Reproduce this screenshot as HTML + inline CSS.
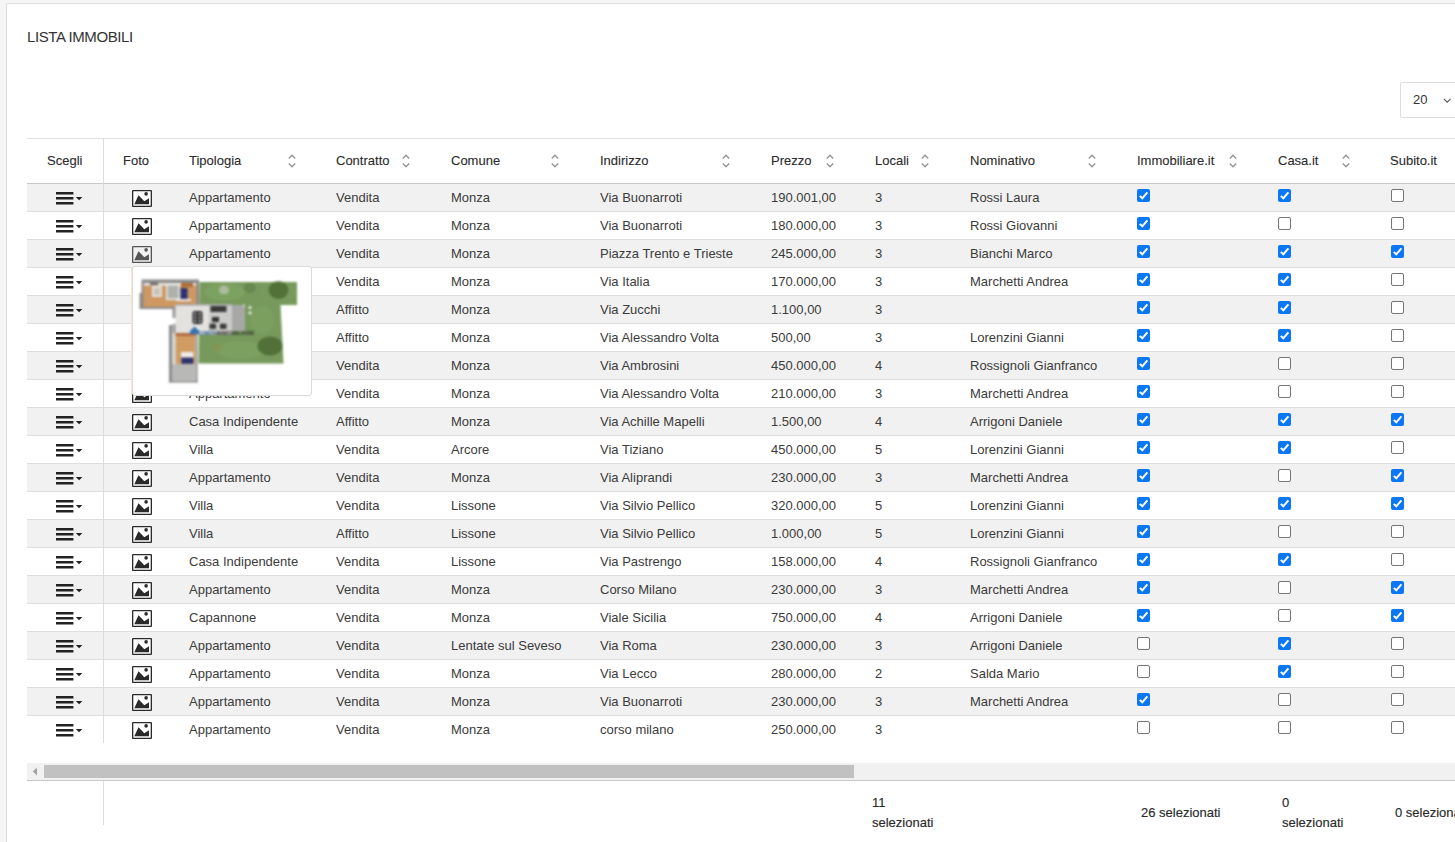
<!DOCTYPE html>
<html><head><meta charset="utf-8"><title>Lista Immobili</title>
<style>
*{box-sizing:border-box;margin:0;padding:0}
html,body{width:1455px;height:842px;overflow:hidden;background:#f5f5f5;font-family:"Liberation Sans",sans-serif;color:#3b3b3b;font-size:13px}
.card{position:absolute;left:6px;top:3px;width:1520px;height:900px;background:#fff;border:1px solid #dedede;border-radius:1px}
.abs{position:absolute;white-space:nowrap}
.title{left:27px;top:27px;font-size:15px;letter-spacing:-0.4px;line-height:19px;color:#333}
.sel{left:1400px;top:82px;width:80px;height:36px;border:1px solid #dcdcdc;border-radius:2px;background:#fff}
.sel span{position:absolute;left:12px;top:8px;line-height:18px;font-size:13px;color:#333}
.hline{position:absolute;left:27px;width:1440px;height:1px}
.row{position:absolute;left:27px;width:1440px;height:28px}
.row.g{background:#f1f1f1}
.t{position:absolute;white-space:nowrap;line-height:28px;height:28px}
.th{position:absolute;white-space:nowrap;line-height:44px;top:139px;color:#2b2b2b;-webkit-text-stroke:0.1px #2b2b2b}
.vsep{position:absolute;left:103px;width:1px;background:#dcdcdc}
.cb{position:absolute;width:13px;height:13px;border-radius:2px}
.cb.on{background:#0b77f5}
.cb.off{background:#fff;border:1px solid #767676}
.ft{position:absolute;white-space:nowrap;line-height:20px;color:#2b2b2b;-webkit-text-stroke:0.15px #2b2b2b}
</style></head><body>
<div class="card"></div>
<div class="abs title">LISTA IMMOBILI</div>
<div class="abs sel"><span>20</span><svg style="position:absolute;left:42px;top:15px" width="9" height="6" viewBox="0 0 9 6"><path d="M0.8 0.8 L4.2 4.2 L7.6 0.8" fill="none" stroke="#555" stroke-width="1.1"/></svg></div>

<div class="hline" style="top:138px;background:#dedede"></div>
<div class="th" style="left:47px">Scegli</div>
<div class="th" style="left:123px">Foto</div>
<div class="th" style="left:189px">Tipologia</div>
<svg class="abs" style="left:288px;top:154px" width="8" height="14" viewBox="0 0 8 14"><path d="M0.8 4.5 L4 1.3 L7.2 4.5 M0.8 9.5 L4 12.7 L7.2 9.5" fill="none" stroke="#959595" stroke-width="1.4"/></svg>
<div class="th" style="left:336px">Contratto</div>
<svg class="abs" style="left:402px;top:154px" width="8" height="14" viewBox="0 0 8 14"><path d="M0.8 4.5 L4 1.3 L7.2 4.5 M0.8 9.5 L4 12.7 L7.2 9.5" fill="none" stroke="#959595" stroke-width="1.4"/></svg>
<div class="th" style="left:451px">Comune</div>
<svg class="abs" style="left:551px;top:154px" width="8" height="14" viewBox="0 0 8 14"><path d="M0.8 4.5 L4 1.3 L7.2 4.5 M0.8 9.5 L4 12.7 L7.2 9.5" fill="none" stroke="#959595" stroke-width="1.4"/></svg>
<div class="th" style="left:600px">Indirizzo</div>
<svg class="abs" style="left:722px;top:154px" width="8" height="14" viewBox="0 0 8 14"><path d="M0.8 4.5 L4 1.3 L7.2 4.5 M0.8 9.5 L4 12.7 L7.2 9.5" fill="none" stroke="#959595" stroke-width="1.4"/></svg>
<div class="th" style="left:771px">Prezzo</div>
<svg class="abs" style="left:826px;top:154px" width="8" height="14" viewBox="0 0 8 14"><path d="M0.8 4.5 L4 1.3 L7.2 4.5 M0.8 9.5 L4 12.7 L7.2 9.5" fill="none" stroke="#959595" stroke-width="1.4"/></svg>
<div class="th" style="left:875px">Locali</div>
<svg class="abs" style="left:921px;top:154px" width="8" height="14" viewBox="0 0 8 14"><path d="M0.8 4.5 L4 1.3 L7.2 4.5 M0.8 9.5 L4 12.7 L7.2 9.5" fill="none" stroke="#959595" stroke-width="1.4"/></svg>
<div class="th" style="left:970px">Nominativo</div>
<svg class="abs" style="left:1088px;top:154px" width="8" height="14" viewBox="0 0 8 14"><path d="M0.8 4.5 L4 1.3 L7.2 4.5 M0.8 9.5 L4 12.7 L7.2 9.5" fill="none" stroke="#959595" stroke-width="1.4"/></svg>
<div class="th" style="left:1137px">Immobiliare.it</div>
<svg class="abs" style="left:1229px;top:154px" width="8" height="14" viewBox="0 0 8 14"><path d="M0.8 4.5 L4 1.3 L7.2 4.5 M0.8 9.5 L4 12.7 L7.2 9.5" fill="none" stroke="#959595" stroke-width="1.4"/></svg>
<div class="th" style="left:1278px">Casa.it</div>
<svg class="abs" style="left:1342px;top:154px" width="8" height="14" viewBox="0 0 8 14"><path d="M0.8 4.5 L4 1.3 L7.2 4.5 M0.8 9.5 L4 12.7 L7.2 9.5" fill="none" stroke="#959595" stroke-width="1.4"/></svg>
<div class="th" style="left:1390px">Subito.it</div>
<div class="hline" style="top:183px;background:#c9c9c9"></div>
<div class="row g" style="top:184px"></div>
<div class="hline" style="top:211px;background:#dedede"></div>
<svg class="abs" style="left:56px;top:192px" width="27" height="14" viewBox="0 0 27 14"><rect x="0" y="0" width="17.4" height="2.5" fill="#222"/><rect x="0" y="5" width="17.4" height="2.5" fill="#222"/><rect x="0" y="10" width="17.4" height="2.5" fill="#222"/><path d="M19.8 5 L26.4 5 L23.1 8.2 Z" fill="#222"/></svg>
<svg class="abs" style="left:132px;top:190px" width="20" height="17" viewBox="0 0 20 17"><rect x="0.65" y="0.65" width="18.7" height="15.7" rx="0.4" fill="#fff" stroke="#2a2a2a" stroke-width="1.3"/><path d="M2.3 14.2 L6.5 5.2 L12.3 11.2 L17 8.2 L17 14.2 Z" fill="#2a2a2a"/><circle cx="14.1" cy="3.9" r="1.8" fill="#2a2a2a"/></svg>
<div class="t" style="left:189px;top:184px">Appartamento</div>
<div class="t" style="left:336px;top:184px">Vendita</div>
<div class="t" style="left:451px;top:184px">Monza</div>
<div class="t" style="left:600px;top:184px">Via Buonarroti</div>
<div class="t" style="left:771px;top:184px">190.001,00</div>
<div class="t" style="left:875px;top:184px">3</div>
<div class="t" style="left:970px;top:184px">Rossi Laura</div>
<svg class="cb on" style="left:1137px;top:189px" viewBox="0 0 13 13"><path d="M2.8 6.9 L5.3 9.3 L10.4 3.3" fill="none" stroke="#fff" stroke-width="2"/></svg>
<svg class="cb on" style="left:1278px;top:189px" viewBox="0 0 13 13"><path d="M2.8 6.9 L5.3 9.3 L10.4 3.3" fill="none" stroke="#fff" stroke-width="2"/></svg>
<div class="cb off" style="left:1391px;top:189px"></div>
<div class="row" style="top:212px"></div>
<div class="hline" style="top:239px;background:#dedede"></div>
<svg class="abs" style="left:56px;top:220px" width="27" height="14" viewBox="0 0 27 14"><rect x="0" y="0" width="17.4" height="2.5" fill="#222"/><rect x="0" y="5" width="17.4" height="2.5" fill="#222"/><rect x="0" y="10" width="17.4" height="2.5" fill="#222"/><path d="M19.8 5 L26.4 5 L23.1 8.2 Z" fill="#222"/></svg>
<svg class="abs" style="left:132px;top:218px" width="20" height="17" viewBox="0 0 20 17"><rect x="0.65" y="0.65" width="18.7" height="15.7" rx="0.4" fill="#fff" stroke="#2a2a2a" stroke-width="1.3"/><path d="M2.3 14.2 L6.5 5.2 L12.3 11.2 L17 8.2 L17 14.2 Z" fill="#2a2a2a"/><circle cx="14.1" cy="3.9" r="1.8" fill="#2a2a2a"/></svg>
<div class="t" style="left:189px;top:212px">Appartamento</div>
<div class="t" style="left:336px;top:212px">Vendita</div>
<div class="t" style="left:451px;top:212px">Monza</div>
<div class="t" style="left:600px;top:212px">Via Buonarroti</div>
<div class="t" style="left:771px;top:212px">180.000,00</div>
<div class="t" style="left:875px;top:212px">3</div>
<div class="t" style="left:970px;top:212px">Rossi Giovanni</div>
<svg class="cb on" style="left:1137px;top:217px" viewBox="0 0 13 13"><path d="M2.8 6.9 L5.3 9.3 L10.4 3.3" fill="none" stroke="#fff" stroke-width="2"/></svg>
<div class="cb off" style="left:1278px;top:217px"></div>
<div class="cb off" style="left:1391px;top:217px"></div>
<div class="row g" style="top:240px"></div>
<div class="hline" style="top:267px;background:#dedede"></div>
<svg class="abs" style="left:56px;top:248px" width="27" height="14" viewBox="0 0 27 14"><rect x="0" y="0" width="17.4" height="2.5" fill="#222"/><rect x="0" y="5" width="17.4" height="2.5" fill="#222"/><rect x="0" y="10" width="17.4" height="2.5" fill="#222"/><path d="M19.8 5 L26.4 5 L23.1 8.2 Z" fill="#222"/></svg>
<svg class="abs" style="left:132px;top:246px" width="20" height="17" viewBox="0 0 20 17"><rect x="0.65" y="0.65" width="18.7" height="15.7" rx="0.4" fill="none" stroke="#555" stroke-width="1.3"/><path d="M2.3 14.2 L6.5 5.2 L12.3 11.2 L17 8.2 L17 14.2 Z" fill="#555"/><circle cx="14.1" cy="3.9" r="1.8" fill="#555"/></svg>
<div class="t" style="left:189px;top:240px">Appartamento</div>
<div class="t" style="left:336px;top:240px">Vendita</div>
<div class="t" style="left:451px;top:240px">Monza</div>
<div class="t" style="left:600px;top:240px">Piazza Trento e Trieste</div>
<div class="t" style="left:771px;top:240px">245.000,00</div>
<div class="t" style="left:875px;top:240px">3</div>
<div class="t" style="left:970px;top:240px">Bianchi Marco</div>
<svg class="cb on" style="left:1137px;top:245px" viewBox="0 0 13 13"><path d="M2.8 6.9 L5.3 9.3 L10.4 3.3" fill="none" stroke="#fff" stroke-width="2"/></svg>
<svg class="cb on" style="left:1278px;top:245px" viewBox="0 0 13 13"><path d="M2.8 6.9 L5.3 9.3 L10.4 3.3" fill="none" stroke="#fff" stroke-width="2"/></svg>
<svg class="cb on" style="left:1391px;top:245px" viewBox="0 0 13 13"><path d="M2.8 6.9 L5.3 9.3 L10.4 3.3" fill="none" stroke="#fff" stroke-width="2"/></svg>
<div class="row" style="top:268px"></div>
<div class="hline" style="top:295px;background:#dedede"></div>
<svg class="abs" style="left:56px;top:276px" width="27" height="14" viewBox="0 0 27 14"><rect x="0" y="0" width="17.4" height="2.5" fill="#222"/><rect x="0" y="5" width="17.4" height="2.5" fill="#222"/><rect x="0" y="10" width="17.4" height="2.5" fill="#222"/><path d="M19.8 5 L26.4 5 L23.1 8.2 Z" fill="#222"/></svg>
<svg class="abs" style="left:132px;top:274px" width="20" height="17" viewBox="0 0 20 17"><rect x="0.65" y="0.65" width="18.7" height="15.7" rx="0.4" fill="#fff" stroke="#2a2a2a" stroke-width="1.3"/><path d="M2.3 14.2 L6.5 5.2 L12.3 11.2 L17 8.2 L17 14.2 Z" fill="#2a2a2a"/><circle cx="14.1" cy="3.9" r="1.8" fill="#2a2a2a"/></svg>
<div class="t" style="left:189px;top:268px">Appartamento</div>
<div class="t" style="left:336px;top:268px">Vendita</div>
<div class="t" style="left:451px;top:268px">Monza</div>
<div class="t" style="left:600px;top:268px">Via Italia</div>
<div class="t" style="left:771px;top:268px">170.000,00</div>
<div class="t" style="left:875px;top:268px">3</div>
<div class="t" style="left:970px;top:268px">Marchetti Andrea</div>
<svg class="cb on" style="left:1137px;top:273px" viewBox="0 0 13 13"><path d="M2.8 6.9 L5.3 9.3 L10.4 3.3" fill="none" stroke="#fff" stroke-width="2"/></svg>
<svg class="cb on" style="left:1278px;top:273px" viewBox="0 0 13 13"><path d="M2.8 6.9 L5.3 9.3 L10.4 3.3" fill="none" stroke="#fff" stroke-width="2"/></svg>
<div class="cb off" style="left:1391px;top:273px"></div>
<div class="row g" style="top:296px"></div>
<div class="hline" style="top:323px;background:#dedede"></div>
<svg class="abs" style="left:56px;top:304px" width="27" height="14" viewBox="0 0 27 14"><rect x="0" y="0" width="17.4" height="2.5" fill="#222"/><rect x="0" y="5" width="17.4" height="2.5" fill="#222"/><rect x="0" y="10" width="17.4" height="2.5" fill="#222"/><path d="M19.8 5 L26.4 5 L23.1 8.2 Z" fill="#222"/></svg>
<svg class="abs" style="left:132px;top:302px" width="20" height="17" viewBox="0 0 20 17"><rect x="0.65" y="0.65" width="18.7" height="15.7" rx="0.4" fill="#fff" stroke="#2a2a2a" stroke-width="1.3"/><path d="M2.3 14.2 L6.5 5.2 L12.3 11.2 L17 8.2 L17 14.2 Z" fill="#2a2a2a"/><circle cx="14.1" cy="3.9" r="1.8" fill="#2a2a2a"/></svg>
<div class="t" style="left:189px;top:296px">Appartamento</div>
<div class="t" style="left:336px;top:296px">Affitto</div>
<div class="t" style="left:451px;top:296px">Monza</div>
<div class="t" style="left:600px;top:296px">Via Zucchi</div>
<div class="t" style="left:771px;top:296px">1.100,00</div>
<div class="t" style="left:875px;top:296px">3</div>
<svg class="cb on" style="left:1137px;top:301px" viewBox="0 0 13 13"><path d="M2.8 6.9 L5.3 9.3 L10.4 3.3" fill="none" stroke="#fff" stroke-width="2"/></svg>
<svg class="cb on" style="left:1278px;top:301px" viewBox="0 0 13 13"><path d="M2.8 6.9 L5.3 9.3 L10.4 3.3" fill="none" stroke="#fff" stroke-width="2"/></svg>
<div class="cb off" style="left:1391px;top:301px"></div>
<div class="row" style="top:324px"></div>
<div class="hline" style="top:351px;background:#dedede"></div>
<svg class="abs" style="left:56px;top:332px" width="27" height="14" viewBox="0 0 27 14"><rect x="0" y="0" width="17.4" height="2.5" fill="#222"/><rect x="0" y="5" width="17.4" height="2.5" fill="#222"/><rect x="0" y="10" width="17.4" height="2.5" fill="#222"/><path d="M19.8 5 L26.4 5 L23.1 8.2 Z" fill="#222"/></svg>
<svg class="abs" style="left:132px;top:330px" width="20" height="17" viewBox="0 0 20 17"><rect x="0.65" y="0.65" width="18.7" height="15.7" rx="0.4" fill="#fff" stroke="#2a2a2a" stroke-width="1.3"/><path d="M2.3 14.2 L6.5 5.2 L12.3 11.2 L17 8.2 L17 14.2 Z" fill="#2a2a2a"/><circle cx="14.1" cy="3.9" r="1.8" fill="#2a2a2a"/></svg>
<div class="t" style="left:189px;top:324px">Appartamento</div>
<div class="t" style="left:336px;top:324px">Affitto</div>
<div class="t" style="left:451px;top:324px">Monza</div>
<div class="t" style="left:600px;top:324px">Via Alessandro Volta</div>
<div class="t" style="left:771px;top:324px">500,00</div>
<div class="t" style="left:875px;top:324px">3</div>
<div class="t" style="left:970px;top:324px">Lorenzini Gianni</div>
<svg class="cb on" style="left:1137px;top:329px" viewBox="0 0 13 13"><path d="M2.8 6.9 L5.3 9.3 L10.4 3.3" fill="none" stroke="#fff" stroke-width="2"/></svg>
<svg class="cb on" style="left:1278px;top:329px" viewBox="0 0 13 13"><path d="M2.8 6.9 L5.3 9.3 L10.4 3.3" fill="none" stroke="#fff" stroke-width="2"/></svg>
<div class="cb off" style="left:1391px;top:329px"></div>
<div class="row g" style="top:352px"></div>
<div class="hline" style="top:379px;background:#dedede"></div>
<svg class="abs" style="left:56px;top:360px" width="27" height="14" viewBox="0 0 27 14"><rect x="0" y="0" width="17.4" height="2.5" fill="#222"/><rect x="0" y="5" width="17.4" height="2.5" fill="#222"/><rect x="0" y="10" width="17.4" height="2.5" fill="#222"/><path d="M19.8 5 L26.4 5 L23.1 8.2 Z" fill="#222"/></svg>
<svg class="abs" style="left:132px;top:358px" width="20" height="17" viewBox="0 0 20 17"><rect x="0.65" y="0.65" width="18.7" height="15.7" rx="0.4" fill="#fff" stroke="#2a2a2a" stroke-width="1.3"/><path d="M2.3 14.2 L6.5 5.2 L12.3 11.2 L17 8.2 L17 14.2 Z" fill="#2a2a2a"/><circle cx="14.1" cy="3.9" r="1.8" fill="#2a2a2a"/></svg>
<div class="t" style="left:189px;top:352px">Appartamento</div>
<div class="t" style="left:336px;top:352px">Vendita</div>
<div class="t" style="left:451px;top:352px">Monza</div>
<div class="t" style="left:600px;top:352px">Via Ambrosini</div>
<div class="t" style="left:771px;top:352px">450.000,00</div>
<div class="t" style="left:875px;top:352px">4</div>
<div class="t" style="left:970px;top:352px">Rossignoli Gianfranco</div>
<svg class="cb on" style="left:1137px;top:357px" viewBox="0 0 13 13"><path d="M2.8 6.9 L5.3 9.3 L10.4 3.3" fill="none" stroke="#fff" stroke-width="2"/></svg>
<div class="cb off" style="left:1278px;top:357px"></div>
<div class="cb off" style="left:1391px;top:357px"></div>
<div class="row" style="top:380px"></div>
<div class="hline" style="top:407px;background:#dedede"></div>
<svg class="abs" style="left:56px;top:388px" width="27" height="14" viewBox="0 0 27 14"><rect x="0" y="0" width="17.4" height="2.5" fill="#222"/><rect x="0" y="5" width="17.4" height="2.5" fill="#222"/><rect x="0" y="10" width="17.4" height="2.5" fill="#222"/><path d="M19.8 5 L26.4 5 L23.1 8.2 Z" fill="#222"/></svg>
<svg class="abs" style="left:132px;top:386px" width="20" height="17" viewBox="0 0 20 17"><rect x="0.65" y="0.65" width="18.7" height="15.7" rx="0.4" fill="#fff" stroke="#2a2a2a" stroke-width="1.3"/><path d="M2.3 14.2 L6.5 5.2 L12.3 11.2 L17 8.2 L17 14.2 Z" fill="#2a2a2a"/><circle cx="14.1" cy="3.9" r="1.8" fill="#2a2a2a"/></svg>
<div class="t" style="left:189px;top:380px">Appartamento</div>
<div class="t" style="left:336px;top:380px">Vendita</div>
<div class="t" style="left:451px;top:380px">Monza</div>
<div class="t" style="left:600px;top:380px">Via Alessandro Volta</div>
<div class="t" style="left:771px;top:380px">210.000,00</div>
<div class="t" style="left:875px;top:380px">3</div>
<div class="t" style="left:970px;top:380px">Marchetti Andrea</div>
<svg class="cb on" style="left:1137px;top:385px" viewBox="0 0 13 13"><path d="M2.8 6.9 L5.3 9.3 L10.4 3.3" fill="none" stroke="#fff" stroke-width="2"/></svg>
<div class="cb off" style="left:1278px;top:385px"></div>
<div class="cb off" style="left:1391px;top:385px"></div>
<div class="row g" style="top:408px"></div>
<div class="hline" style="top:435px;background:#dedede"></div>
<svg class="abs" style="left:56px;top:416px" width="27" height="14" viewBox="0 0 27 14"><rect x="0" y="0" width="17.4" height="2.5" fill="#222"/><rect x="0" y="5" width="17.4" height="2.5" fill="#222"/><rect x="0" y="10" width="17.4" height="2.5" fill="#222"/><path d="M19.8 5 L26.4 5 L23.1 8.2 Z" fill="#222"/></svg>
<svg class="abs" style="left:132px;top:414px" width="20" height="17" viewBox="0 0 20 17"><rect x="0.65" y="0.65" width="18.7" height="15.7" rx="0.4" fill="#fff" stroke="#2a2a2a" stroke-width="1.3"/><path d="M2.3 14.2 L6.5 5.2 L12.3 11.2 L17 8.2 L17 14.2 Z" fill="#2a2a2a"/><circle cx="14.1" cy="3.9" r="1.8" fill="#2a2a2a"/></svg>
<div class="t" style="left:189px;top:408px">Casa Indipendente</div>
<div class="t" style="left:336px;top:408px">Affitto</div>
<div class="t" style="left:451px;top:408px">Monza</div>
<div class="t" style="left:600px;top:408px">Via Achille Mapelli</div>
<div class="t" style="left:771px;top:408px">1.500,00</div>
<div class="t" style="left:875px;top:408px">4</div>
<div class="t" style="left:970px;top:408px">Arrigoni Daniele</div>
<svg class="cb on" style="left:1137px;top:413px" viewBox="0 0 13 13"><path d="M2.8 6.9 L5.3 9.3 L10.4 3.3" fill="none" stroke="#fff" stroke-width="2"/></svg>
<svg class="cb on" style="left:1278px;top:413px" viewBox="0 0 13 13"><path d="M2.8 6.9 L5.3 9.3 L10.4 3.3" fill="none" stroke="#fff" stroke-width="2"/></svg>
<svg class="cb on" style="left:1391px;top:413px" viewBox="0 0 13 13"><path d="M2.8 6.9 L5.3 9.3 L10.4 3.3" fill="none" stroke="#fff" stroke-width="2"/></svg>
<div class="row" style="top:436px"></div>
<div class="hline" style="top:463px;background:#dedede"></div>
<svg class="abs" style="left:56px;top:444px" width="27" height="14" viewBox="0 0 27 14"><rect x="0" y="0" width="17.4" height="2.5" fill="#222"/><rect x="0" y="5" width="17.4" height="2.5" fill="#222"/><rect x="0" y="10" width="17.4" height="2.5" fill="#222"/><path d="M19.8 5 L26.4 5 L23.1 8.2 Z" fill="#222"/></svg>
<svg class="abs" style="left:132px;top:442px" width="20" height="17" viewBox="0 0 20 17"><rect x="0.65" y="0.65" width="18.7" height="15.7" rx="0.4" fill="#fff" stroke="#2a2a2a" stroke-width="1.3"/><path d="M2.3 14.2 L6.5 5.2 L12.3 11.2 L17 8.2 L17 14.2 Z" fill="#2a2a2a"/><circle cx="14.1" cy="3.9" r="1.8" fill="#2a2a2a"/></svg>
<div class="t" style="left:189px;top:436px">Villa</div>
<div class="t" style="left:336px;top:436px">Vendita</div>
<div class="t" style="left:451px;top:436px">Arcore</div>
<div class="t" style="left:600px;top:436px">Via Tiziano</div>
<div class="t" style="left:771px;top:436px">450.000,00</div>
<div class="t" style="left:875px;top:436px">5</div>
<div class="t" style="left:970px;top:436px">Lorenzini Gianni</div>
<svg class="cb on" style="left:1137px;top:441px" viewBox="0 0 13 13"><path d="M2.8 6.9 L5.3 9.3 L10.4 3.3" fill="none" stroke="#fff" stroke-width="2"/></svg>
<svg class="cb on" style="left:1278px;top:441px" viewBox="0 0 13 13"><path d="M2.8 6.9 L5.3 9.3 L10.4 3.3" fill="none" stroke="#fff" stroke-width="2"/></svg>
<div class="cb off" style="left:1391px;top:441px"></div>
<div class="row g" style="top:464px"></div>
<div class="hline" style="top:491px;background:#dedede"></div>
<svg class="abs" style="left:56px;top:472px" width="27" height="14" viewBox="0 0 27 14"><rect x="0" y="0" width="17.4" height="2.5" fill="#222"/><rect x="0" y="5" width="17.4" height="2.5" fill="#222"/><rect x="0" y="10" width="17.4" height="2.5" fill="#222"/><path d="M19.8 5 L26.4 5 L23.1 8.2 Z" fill="#222"/></svg>
<svg class="abs" style="left:132px;top:470px" width="20" height="17" viewBox="0 0 20 17"><rect x="0.65" y="0.65" width="18.7" height="15.7" rx="0.4" fill="#fff" stroke="#2a2a2a" stroke-width="1.3"/><path d="M2.3 14.2 L6.5 5.2 L12.3 11.2 L17 8.2 L17 14.2 Z" fill="#2a2a2a"/><circle cx="14.1" cy="3.9" r="1.8" fill="#2a2a2a"/></svg>
<div class="t" style="left:189px;top:464px">Appartamento</div>
<div class="t" style="left:336px;top:464px">Vendita</div>
<div class="t" style="left:451px;top:464px">Monza</div>
<div class="t" style="left:600px;top:464px">Via Aliprandi</div>
<div class="t" style="left:771px;top:464px">230.000,00</div>
<div class="t" style="left:875px;top:464px">3</div>
<div class="t" style="left:970px;top:464px">Marchetti Andrea</div>
<svg class="cb on" style="left:1137px;top:469px" viewBox="0 0 13 13"><path d="M2.8 6.9 L5.3 9.3 L10.4 3.3" fill="none" stroke="#fff" stroke-width="2"/></svg>
<div class="cb off" style="left:1278px;top:469px"></div>
<svg class="cb on" style="left:1391px;top:469px" viewBox="0 0 13 13"><path d="M2.8 6.9 L5.3 9.3 L10.4 3.3" fill="none" stroke="#fff" stroke-width="2"/></svg>
<div class="row" style="top:492px"></div>
<div class="hline" style="top:519px;background:#dedede"></div>
<svg class="abs" style="left:56px;top:500px" width="27" height="14" viewBox="0 0 27 14"><rect x="0" y="0" width="17.4" height="2.5" fill="#222"/><rect x="0" y="5" width="17.4" height="2.5" fill="#222"/><rect x="0" y="10" width="17.4" height="2.5" fill="#222"/><path d="M19.8 5 L26.4 5 L23.1 8.2 Z" fill="#222"/></svg>
<svg class="abs" style="left:132px;top:498px" width="20" height="17" viewBox="0 0 20 17"><rect x="0.65" y="0.65" width="18.7" height="15.7" rx="0.4" fill="#fff" stroke="#2a2a2a" stroke-width="1.3"/><path d="M2.3 14.2 L6.5 5.2 L12.3 11.2 L17 8.2 L17 14.2 Z" fill="#2a2a2a"/><circle cx="14.1" cy="3.9" r="1.8" fill="#2a2a2a"/></svg>
<div class="t" style="left:189px;top:492px">Villa</div>
<div class="t" style="left:336px;top:492px">Vendita</div>
<div class="t" style="left:451px;top:492px">Lissone</div>
<div class="t" style="left:600px;top:492px">Via Silvio Pellico</div>
<div class="t" style="left:771px;top:492px">320.000,00</div>
<div class="t" style="left:875px;top:492px">5</div>
<div class="t" style="left:970px;top:492px">Lorenzini Gianni</div>
<svg class="cb on" style="left:1137px;top:497px" viewBox="0 0 13 13"><path d="M2.8 6.9 L5.3 9.3 L10.4 3.3" fill="none" stroke="#fff" stroke-width="2"/></svg>
<svg class="cb on" style="left:1278px;top:497px" viewBox="0 0 13 13"><path d="M2.8 6.9 L5.3 9.3 L10.4 3.3" fill="none" stroke="#fff" stroke-width="2"/></svg>
<svg class="cb on" style="left:1391px;top:497px" viewBox="0 0 13 13"><path d="M2.8 6.9 L5.3 9.3 L10.4 3.3" fill="none" stroke="#fff" stroke-width="2"/></svg>
<div class="row g" style="top:520px"></div>
<div class="hline" style="top:547px;background:#dedede"></div>
<svg class="abs" style="left:56px;top:528px" width="27" height="14" viewBox="0 0 27 14"><rect x="0" y="0" width="17.4" height="2.5" fill="#222"/><rect x="0" y="5" width="17.4" height="2.5" fill="#222"/><rect x="0" y="10" width="17.4" height="2.5" fill="#222"/><path d="M19.8 5 L26.4 5 L23.1 8.2 Z" fill="#222"/></svg>
<svg class="abs" style="left:132px;top:526px" width="20" height="17" viewBox="0 0 20 17"><rect x="0.65" y="0.65" width="18.7" height="15.7" rx="0.4" fill="#fff" stroke="#2a2a2a" stroke-width="1.3"/><path d="M2.3 14.2 L6.5 5.2 L12.3 11.2 L17 8.2 L17 14.2 Z" fill="#2a2a2a"/><circle cx="14.1" cy="3.9" r="1.8" fill="#2a2a2a"/></svg>
<div class="t" style="left:189px;top:520px">Villa</div>
<div class="t" style="left:336px;top:520px">Affitto</div>
<div class="t" style="left:451px;top:520px">Lissone</div>
<div class="t" style="left:600px;top:520px">Via Silvio Pellico</div>
<div class="t" style="left:771px;top:520px">1.000,00</div>
<div class="t" style="left:875px;top:520px">5</div>
<div class="t" style="left:970px;top:520px">Lorenzini Gianni</div>
<svg class="cb on" style="left:1137px;top:525px" viewBox="0 0 13 13"><path d="M2.8 6.9 L5.3 9.3 L10.4 3.3" fill="none" stroke="#fff" stroke-width="2"/></svg>
<div class="cb off" style="left:1278px;top:525px"></div>
<div class="cb off" style="left:1391px;top:525px"></div>
<div class="row" style="top:548px"></div>
<div class="hline" style="top:575px;background:#dedede"></div>
<svg class="abs" style="left:56px;top:556px" width="27" height="14" viewBox="0 0 27 14"><rect x="0" y="0" width="17.4" height="2.5" fill="#222"/><rect x="0" y="5" width="17.4" height="2.5" fill="#222"/><rect x="0" y="10" width="17.4" height="2.5" fill="#222"/><path d="M19.8 5 L26.4 5 L23.1 8.2 Z" fill="#222"/></svg>
<svg class="abs" style="left:132px;top:554px" width="20" height="17" viewBox="0 0 20 17"><rect x="0.65" y="0.65" width="18.7" height="15.7" rx="0.4" fill="#fff" stroke="#2a2a2a" stroke-width="1.3"/><path d="M2.3 14.2 L6.5 5.2 L12.3 11.2 L17 8.2 L17 14.2 Z" fill="#2a2a2a"/><circle cx="14.1" cy="3.9" r="1.8" fill="#2a2a2a"/></svg>
<div class="t" style="left:189px;top:548px">Casa Indipendente</div>
<div class="t" style="left:336px;top:548px">Vendita</div>
<div class="t" style="left:451px;top:548px">Lissone</div>
<div class="t" style="left:600px;top:548px">Via Pastrengo</div>
<div class="t" style="left:771px;top:548px">158.000,00</div>
<div class="t" style="left:875px;top:548px">4</div>
<div class="t" style="left:970px;top:548px">Rossignoli Gianfranco</div>
<svg class="cb on" style="left:1137px;top:553px" viewBox="0 0 13 13"><path d="M2.8 6.9 L5.3 9.3 L10.4 3.3" fill="none" stroke="#fff" stroke-width="2"/></svg>
<svg class="cb on" style="left:1278px;top:553px" viewBox="0 0 13 13"><path d="M2.8 6.9 L5.3 9.3 L10.4 3.3" fill="none" stroke="#fff" stroke-width="2"/></svg>
<div class="cb off" style="left:1391px;top:553px"></div>
<div class="row g" style="top:576px"></div>
<div class="hline" style="top:603px;background:#dedede"></div>
<svg class="abs" style="left:56px;top:584px" width="27" height="14" viewBox="0 0 27 14"><rect x="0" y="0" width="17.4" height="2.5" fill="#222"/><rect x="0" y="5" width="17.4" height="2.5" fill="#222"/><rect x="0" y="10" width="17.4" height="2.5" fill="#222"/><path d="M19.8 5 L26.4 5 L23.1 8.2 Z" fill="#222"/></svg>
<svg class="abs" style="left:132px;top:582px" width="20" height="17" viewBox="0 0 20 17"><rect x="0.65" y="0.65" width="18.7" height="15.7" rx="0.4" fill="#fff" stroke="#2a2a2a" stroke-width="1.3"/><path d="M2.3 14.2 L6.5 5.2 L12.3 11.2 L17 8.2 L17 14.2 Z" fill="#2a2a2a"/><circle cx="14.1" cy="3.9" r="1.8" fill="#2a2a2a"/></svg>
<div class="t" style="left:189px;top:576px">Appartamento</div>
<div class="t" style="left:336px;top:576px">Vendita</div>
<div class="t" style="left:451px;top:576px">Monza</div>
<div class="t" style="left:600px;top:576px">Corso Milano</div>
<div class="t" style="left:771px;top:576px">230.000,00</div>
<div class="t" style="left:875px;top:576px">3</div>
<div class="t" style="left:970px;top:576px">Marchetti Andrea</div>
<svg class="cb on" style="left:1137px;top:581px" viewBox="0 0 13 13"><path d="M2.8 6.9 L5.3 9.3 L10.4 3.3" fill="none" stroke="#fff" stroke-width="2"/></svg>
<div class="cb off" style="left:1278px;top:581px"></div>
<svg class="cb on" style="left:1391px;top:581px" viewBox="0 0 13 13"><path d="M2.8 6.9 L5.3 9.3 L10.4 3.3" fill="none" stroke="#fff" stroke-width="2"/></svg>
<div class="row" style="top:604px"></div>
<div class="hline" style="top:631px;background:#dedede"></div>
<svg class="abs" style="left:56px;top:612px" width="27" height="14" viewBox="0 0 27 14"><rect x="0" y="0" width="17.4" height="2.5" fill="#222"/><rect x="0" y="5" width="17.4" height="2.5" fill="#222"/><rect x="0" y="10" width="17.4" height="2.5" fill="#222"/><path d="M19.8 5 L26.4 5 L23.1 8.2 Z" fill="#222"/></svg>
<svg class="abs" style="left:132px;top:610px" width="20" height="17" viewBox="0 0 20 17"><rect x="0.65" y="0.65" width="18.7" height="15.7" rx="0.4" fill="#fff" stroke="#2a2a2a" stroke-width="1.3"/><path d="M2.3 14.2 L6.5 5.2 L12.3 11.2 L17 8.2 L17 14.2 Z" fill="#2a2a2a"/><circle cx="14.1" cy="3.9" r="1.8" fill="#2a2a2a"/></svg>
<div class="t" style="left:189px;top:604px">Capannone</div>
<div class="t" style="left:336px;top:604px">Vendita</div>
<div class="t" style="left:451px;top:604px">Monza</div>
<div class="t" style="left:600px;top:604px">Viale Sicilia</div>
<div class="t" style="left:771px;top:604px">750.000,00</div>
<div class="t" style="left:875px;top:604px">4</div>
<div class="t" style="left:970px;top:604px">Arrigoni Daniele</div>
<svg class="cb on" style="left:1137px;top:609px" viewBox="0 0 13 13"><path d="M2.8 6.9 L5.3 9.3 L10.4 3.3" fill="none" stroke="#fff" stroke-width="2"/></svg>
<div class="cb off" style="left:1278px;top:609px"></div>
<svg class="cb on" style="left:1391px;top:609px" viewBox="0 0 13 13"><path d="M2.8 6.9 L5.3 9.3 L10.4 3.3" fill="none" stroke="#fff" stroke-width="2"/></svg>
<div class="row g" style="top:632px"></div>
<div class="hline" style="top:659px;background:#dedede"></div>
<svg class="abs" style="left:56px;top:640px" width="27" height="14" viewBox="0 0 27 14"><rect x="0" y="0" width="17.4" height="2.5" fill="#222"/><rect x="0" y="5" width="17.4" height="2.5" fill="#222"/><rect x="0" y="10" width="17.4" height="2.5" fill="#222"/><path d="M19.8 5 L26.4 5 L23.1 8.2 Z" fill="#222"/></svg>
<svg class="abs" style="left:132px;top:638px" width="20" height="17" viewBox="0 0 20 17"><rect x="0.65" y="0.65" width="18.7" height="15.7" rx="0.4" fill="#fff" stroke="#2a2a2a" stroke-width="1.3"/><path d="M2.3 14.2 L6.5 5.2 L12.3 11.2 L17 8.2 L17 14.2 Z" fill="#2a2a2a"/><circle cx="14.1" cy="3.9" r="1.8" fill="#2a2a2a"/></svg>
<div class="t" style="left:189px;top:632px">Appartamento</div>
<div class="t" style="left:336px;top:632px">Vendita</div>
<div class="t" style="left:451px;top:632px">Lentate sul Seveso</div>
<div class="t" style="left:600px;top:632px">Via Roma</div>
<div class="t" style="left:771px;top:632px">230.000,00</div>
<div class="t" style="left:875px;top:632px">3</div>
<div class="t" style="left:970px;top:632px">Arrigoni Daniele</div>
<div class="cb off" style="left:1137px;top:637px"></div>
<svg class="cb on" style="left:1278px;top:637px" viewBox="0 0 13 13"><path d="M2.8 6.9 L5.3 9.3 L10.4 3.3" fill="none" stroke="#fff" stroke-width="2"/></svg>
<div class="cb off" style="left:1391px;top:637px"></div>
<div class="row" style="top:660px"></div>
<div class="hline" style="top:687px;background:#dedede"></div>
<svg class="abs" style="left:56px;top:668px" width="27" height="14" viewBox="0 0 27 14"><rect x="0" y="0" width="17.4" height="2.5" fill="#222"/><rect x="0" y="5" width="17.4" height="2.5" fill="#222"/><rect x="0" y="10" width="17.4" height="2.5" fill="#222"/><path d="M19.8 5 L26.4 5 L23.1 8.2 Z" fill="#222"/></svg>
<svg class="abs" style="left:132px;top:666px" width="20" height="17" viewBox="0 0 20 17"><rect x="0.65" y="0.65" width="18.7" height="15.7" rx="0.4" fill="#fff" stroke="#2a2a2a" stroke-width="1.3"/><path d="M2.3 14.2 L6.5 5.2 L12.3 11.2 L17 8.2 L17 14.2 Z" fill="#2a2a2a"/><circle cx="14.1" cy="3.9" r="1.8" fill="#2a2a2a"/></svg>
<div class="t" style="left:189px;top:660px">Appartamento</div>
<div class="t" style="left:336px;top:660px">Vendita</div>
<div class="t" style="left:451px;top:660px">Monza</div>
<div class="t" style="left:600px;top:660px">Via Lecco</div>
<div class="t" style="left:771px;top:660px">280.000,00</div>
<div class="t" style="left:875px;top:660px">2</div>
<div class="t" style="left:970px;top:660px">Salda Mario</div>
<div class="cb off" style="left:1137px;top:665px"></div>
<svg class="cb on" style="left:1278px;top:665px" viewBox="0 0 13 13"><path d="M2.8 6.9 L5.3 9.3 L10.4 3.3" fill="none" stroke="#fff" stroke-width="2"/></svg>
<div class="cb off" style="left:1391px;top:665px"></div>
<div class="row g" style="top:688px"></div>
<div class="hline" style="top:715px;background:#dedede"></div>
<svg class="abs" style="left:56px;top:696px" width="27" height="14" viewBox="0 0 27 14"><rect x="0" y="0" width="17.4" height="2.5" fill="#222"/><rect x="0" y="5" width="17.4" height="2.5" fill="#222"/><rect x="0" y="10" width="17.4" height="2.5" fill="#222"/><path d="M19.8 5 L26.4 5 L23.1 8.2 Z" fill="#222"/></svg>
<svg class="abs" style="left:132px;top:694px" width="20" height="17" viewBox="0 0 20 17"><rect x="0.65" y="0.65" width="18.7" height="15.7" rx="0.4" fill="#fff" stroke="#2a2a2a" stroke-width="1.3"/><path d="M2.3 14.2 L6.5 5.2 L12.3 11.2 L17 8.2 L17 14.2 Z" fill="#2a2a2a"/><circle cx="14.1" cy="3.9" r="1.8" fill="#2a2a2a"/></svg>
<div class="t" style="left:189px;top:688px">Appartamento</div>
<div class="t" style="left:336px;top:688px">Vendita</div>
<div class="t" style="left:451px;top:688px">Monza</div>
<div class="t" style="left:600px;top:688px">Via Buonarroti</div>
<div class="t" style="left:771px;top:688px">230.000,00</div>
<div class="t" style="left:875px;top:688px">3</div>
<div class="t" style="left:970px;top:688px">Marchetti Andrea</div>
<svg class="cb on" style="left:1137px;top:693px" viewBox="0 0 13 13"><path d="M2.8 6.9 L5.3 9.3 L10.4 3.3" fill="none" stroke="#fff" stroke-width="2"/></svg>
<div class="cb off" style="left:1278px;top:693px"></div>
<div class="cb off" style="left:1391px;top:693px"></div>
<div class="row" style="top:716px"></div>
<svg class="abs" style="left:56px;top:724px" width="27" height="14" viewBox="0 0 27 14"><rect x="0" y="0" width="17.4" height="2.5" fill="#222"/><rect x="0" y="5" width="17.4" height="2.5" fill="#222"/><rect x="0" y="10" width="17.4" height="2.5" fill="#222"/><path d="M19.8 5 L26.4 5 L23.1 8.2 Z" fill="#222"/></svg>
<svg class="abs" style="left:132px;top:722px" width="20" height="17" viewBox="0 0 20 17"><rect x="0.65" y="0.65" width="18.7" height="15.7" rx="0.4" fill="#fff" stroke="#2a2a2a" stroke-width="1.3"/><path d="M2.3 14.2 L6.5 5.2 L12.3 11.2 L17 8.2 L17 14.2 Z" fill="#2a2a2a"/><circle cx="14.1" cy="3.9" r="1.8" fill="#2a2a2a"/></svg>
<div class="t" style="left:189px;top:716px">Appartamento</div>
<div class="t" style="left:336px;top:716px">Vendita</div>
<div class="t" style="left:451px;top:716px">Monza</div>
<div class="t" style="left:600px;top:716px">corso milano</div>
<div class="t" style="left:771px;top:716px">250.000,00</div>
<div class="t" style="left:875px;top:716px">3</div>
<div class="cb off" style="left:1137px;top:721px"></div>
<div class="cb off" style="left:1278px;top:721px"></div>
<div class="cb off" style="left:1391px;top:721px"></div>
<div class="vsep" style="top:138px;height:605px"></div>
<div class="abs" style="left:27px;top:763px;width:1440px;height:17px;background:#f1f1f1"></div>
<svg class="abs" style="left:32px;top:767px" width="6" height="9" viewBox="0 0 6 9"><path d="M5 0.5 L0.8 4.5 L5 8.5 Z" fill="#a3a3a3"/></svg>
<div class="abs" style="left:44px;top:765px;width:810px;height:13px;background:#c1c1c1"></div>
<div class="hline" style="top:780px;background:#c9c9c9"></div>
<div class="vsep" style="top:781px;height:44px"></div>
<div class="ft" style="left:872px;top:793px">11</div>
<div class="ft" style="left:872px;top:813px">selezionati</div>
<div class="ft" style="left:1141px;top:803px">26 selezionati</div>
<div class="ft" style="left:1282px;top:793px">0</div>
<div class="ft" style="left:1282px;top:813px">selezionati</div>
<div class="ft" style="left:1395px;top:803px">0 selezionati</div>
<div class="abs" style="left:131px;top:267px;width:1px;height:128px;background:#f3ebcb"></div>
<div class="abs" style="left:132px;top:266px;width:180px;height:130px;background:#fff;border-radius:3px;border:1px solid #dadada;overflow:hidden">
<svg width="179" height="128" viewBox="132 267 179 128" style="position:absolute;left:-1px;top:0;filter:blur(0.8px)">
<g>
<polygon points="199.5,282 297,282 297,305 280.5,305 283.5,363.5 198.5,363.5" fill="#779a5c"/>
<ellipse cx="225" cy="292" rx="20" ry="9" fill="#82a866" opacity="0.5"/>
<ellipse cx="240" cy="350" rx="25" ry="9" fill="#80a564" opacity="0.5"/>
<ellipse cx="262" cy="320" rx="12" ry="14" fill="#7fa664" opacity="0.45"/>
<ellipse cx="278.5" cy="290" rx="10" ry="9" fill="#48672f" opacity="0.8"/>
<ellipse cx="270" cy="346" rx="12.5" ry="9.5" fill="#48672f" opacity="0.8"/>
<ellipse cx="250" cy="288" rx="6" ry="5" fill="#5b7a44" opacity="0.55"/>
<ellipse cx="218" cy="347" rx="5" ry="4" fill="#8f8f48" opacity="0.45"/>
<ellipse cx="224" cy="290" rx="5" ry="4.5" fill="#c9cfc6" opacity="0.6"/>
<polygon points="141.5,279.5 199,279.5 199,309 139.5,309 139.5,293 141.5,293" fill="#8b8b8b"/>
<rect x="143.5" y="283" width="53" height="24" fill="#cd9862"/>
<rect x="144" y="283" width="52" height="2.5" fill="#e9e7e3"/>
<rect x="150" y="283" width="8" height="2" fill="#666"/>
<rect x="181" y="283" width="12" height="4" fill="#b06c38"/>
<rect x="166" y="284" width="14" height="16" fill="#ebebea"/>
<rect x="167.5" y="285.5" width="11" height="13" fill="#aeb1ab"/>
<rect x="152" y="286" width="10" height="11" fill="#e4e1dc"/>
<rect x="154" y="288" width="6" height="7" fill="#c6c1ba"/>
<rect x="180.5" y="288" width="7" height="11" fill="#2c3373"/>
<rect x="176" y="299" width="15" height="2" fill="#eee"/>
<rect x="175.5" y="304.5" width="34" height="30" fill="#e3e2df"/>
<rect x="209" y="304.5" width="23" height="30" fill="#cbcbc9"/>
<rect x="176" y="304" width="56" height="1.5" fill="#a5a5a5"/>
<rect x="232" y="305" width="13" height="26" fill="#a7a8a6"/>
<rect x="172.5" y="309" width="3" height="9" fill="#989898"/>
<rect x="172.5" y="324" width="3" height="9" fill="#989898"/>
<rect x="192.5" y="311" width="10" height="13" rx="2" fill="#2e2e2e"/>
<circle cx="195.3" cy="313.8" r="1.1" fill="#ddd"/><circle cx="199.7" cy="313.8" r="1.1" fill="#ddd"/>
<circle cx="195.3" cy="317.5" r="1.1" fill="#ddd"/><circle cx="199.7" cy="317.5" r="1.1" fill="#ddd"/>
<circle cx="195.3" cy="321.2" r="1.1" fill="#ddd"/><circle cx="199.7" cy="321.2" r="1.1" fill="#ddd"/>
<rect x="210.5" y="306" width="16" height="6" fill="#3a3a3a"/>
<rect x="212" y="317" width="7" height="5" fill="#333"/>
<rect x="209.5" y="323.7" width="6.5" height="5.2" fill="#3a3a3a"/>
<rect x="220" y="323.7" width="6.5" height="5.2" fill="#3a3a3a"/>
<circle cx="244" cy="305.6" r="1" fill="#eee"/>
<circle cx="250" cy="307.5" r="1.6" fill="#eee"/>
<circle cx="250" cy="312.8" r="1.6" fill="#eee"/>
<rect x="169" y="325" width="3" height="57.5" fill="#8b8b8b"/>
<rect x="169" y="380.5" width="28.5" height="2" fill="#8b8b8b"/>
<rect x="195.5" y="333" width="2" height="49.5" fill="#8b8b8b"/>
<rect x="172" y="333" width="23.5" height="48" fill="#d6d6d4"/>
<rect x="175.8" y="333.4" width="19.6" height="31" fill="#d19c63"/>
<rect x="175.5" y="333" width="20" height="3" fill="#b06d3e"/>
<rect x="172" y="364.3" width="23.5" height="16.5" fill="#b8b8b6"/>
<rect x="181" y="352" width="12.3" height="5.6" fill="#ececec"/>
<rect x="181.4" y="357.6" width="12" height="6.2" fill="#2c3373"/>
<polygon points="190,331 194.5,326.5 199,331 199,334 190,334" fill="#3474b2"/>
<text x="198.5" y="335.3" font-family="Liberation Sans" font-weight="bold" font-size="5.6" fill="#2c5d92" textLength="18" lengthAdjust="spacingAndGlyphs">COMETA</text>
<text x="216.5" y="335.3" font-family="Liberation Sans" font-weight="bold" font-size="5.6" fill="#333" textLength="38" lengthAdjust="spacingAndGlyphs">IMMOBILIARE</text>
</g>
</svg></div>
</body></html>
